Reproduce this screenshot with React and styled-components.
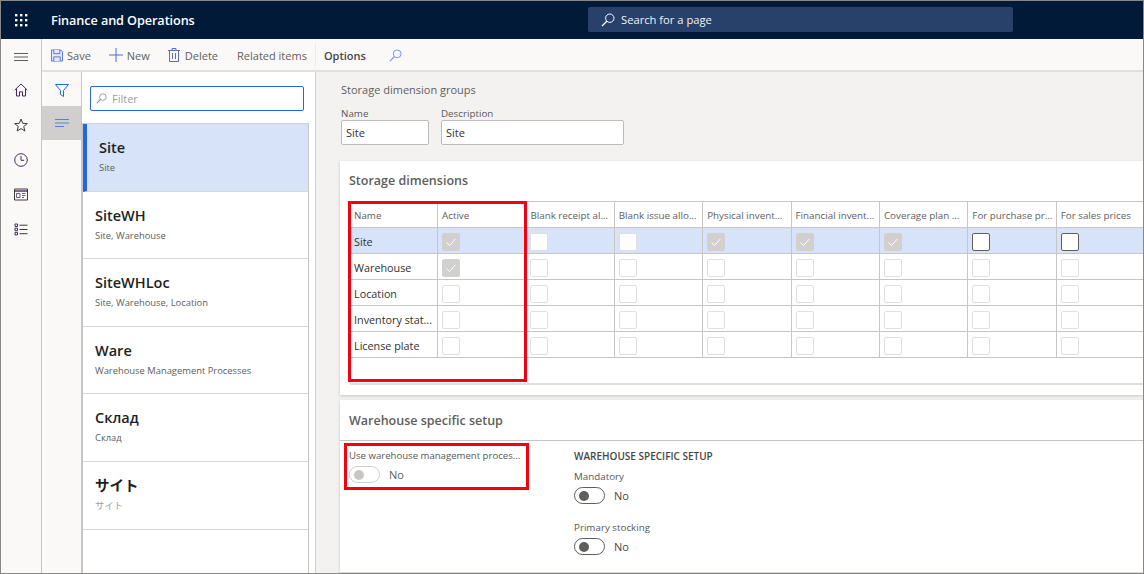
import styled, { createGlobalStyle } from "styled-components";

const GlobalStyle = createGlobalStyle`
  html, body {
    margin: 0;
    padding: 0;
    background: #fff;
    overflow: hidden;
  }
  * {
    box-sizing: border-box;
  }
`;

const Page = styled.div`
  width: 1144px;
  height: 574px;
  display: flex;
  flex-direction: column;
  overflow: hidden;
  border: 1px solid #8a8886;
  font-family: "Open Sans", "Noto Sans CJK JP", sans-serif;
  font-size: 11px;
  color: #323130;
`;

const TopBar = styled.header`
  height: 38px;
  flex: none;
  display: flex;
  align-items: center;
  background: #001a38;
  color: #fff;
  position: relative;
`;

const Waffle = styled.div`
  width: 50px;
  padding-left: 13px;
  display: flex;
`;

const Brand = styled.div`
  font-size: 12.7px;
  font-weight: 600;
  letter-spacing: -0.1px;
`;

const SearchBox = styled.div`
  position: absolute;
  left: 587px;
  top: 6px;
  width: 425px;
  height: 25px;
  padding-left: 13px;
  background: #27416a;
  border-radius: 2px;
  display: flex;
  align-items: center;
  gap: 6px;
  font-size: 11.2px;
  color: #f3f2f1;
`;

const Body = styled.div`
  flex: 1;
  display: flex;
  min-height: 0;
`;

const NavRail = styled.nav`
  width: 41px;
  flex: none;
  background: #faf9f8;
  border-right: 1px solid #c8c6c4;
  display: flex;
  flex-direction: column;
  align-items: center;
  padding-top: 14px;
`;

const NavItem = styled.div`
  height: ${(p) => p.$height || 35}px;
  display: flex;
  align-items: flex-start;
  justify-content: center;
`;

const Main = styled.div`
  flex: 1;
  min-width: 0;
  display: flex;
  flex-direction: column;
`;

const Toolbar = styled.div`
  height: 33px;
  flex: none;
  background: #faf9f8;
  border-bottom: 2px solid #e1dfdd;
  display: flex;
  align-items: center;
  padding: 1px 0 0 9px;
  font-size: 11px;
  color: #605e5c;
`;

const ToolButton = styled.div`
  display: flex;
  align-items: center;
  gap: 4px;
  margin-right: ${(p) => p.$gap || 18}px;
`;

const ToolDivider = styled.div`
  width: 1px;
  height: 24px;
  background: #edebe9;
  margin-right: 8px;
`;

const OptionsLabel = styled.div`
  font-weight: 600;
  color: #484644;
  margin-right: 23px;
`;

const Workspace = styled.div`
  flex: 1;
  min-height: 0;
  display: flex;
`;

const FilterRail = styled.div`
  width: 40px;
  flex: none;
  background: #faf9f8;
  border-right: 1px solid #c8c6c4;
`;

const RailButton = styled.div`
  height: ${(p) => p.$height}px;
  background: ${(p) => (p.$active ? "#d0cfce" : "transparent")};
  display: flex;
  justify-content: center;
  padding-top: ${(p) => p.$top}px;
`;

const ListPane = styled.aside`
  width: 234px;
  flex: none;
  background: #fff;
  border-right: 1px solid #d2d0ce;
  display: flex;
  flex-direction: column;
`;

const FilterWrap = styled.div`
  height: 51px;
  flex: none;
  padding: 14px 5px 0 8px;
`;

const FilterInput = styled.div`
  width: 214px;
  height: 25px;
  border: 1px solid #2266e3;
  border-radius: 2px;
  display: flex;
  align-items: center;
  gap: 5px;
  padding-left: 5px;
  color: #a19f9d;
  font-size: 11px;
`;

const ListBody = styled.div`
  flex: 1;
  margin-right: 6px;
  border-right: 1px solid #c8c6c4;
  border-left: 1px solid #c8c6c4;
  border-top: 1px solid #d2d0ce;
`;

const ListRow = styled.div`
  height: 67.6px;
  padding: 14px 0 0 12px;
  background: ${(p) => (p.$active ? "#d6e3f9" : "#fff")};
  border-left: ${(p) => (p.$active ? "4px solid #2266e3" : "none")};
  border-bottom: 1px solid #d8d6d4;
`;

const RowTitle = styled.div`
  font-size: 14.5px;
  line-height: 20px;
  font-weight: 600;
  color: #201f1e;
`;

const RowText = styled.div`
  font-size: 9.4px;
  line-height: 14px;
  margin-top: 3px;
  color: ${(p) => p.$color || "#605e5c"};
`;

const Content = styled.main`
  flex: 1;
  min-width: 0;
  background: #f3f2f1;
  padding: 10px 0 0 24px;
  overflow: hidden;
`;

const PageCaption = styled.div`
  font-size: 11px;
  line-height: 16px;
  margin-left: 1px;
  color: #605e5c;
`;

const FieldRow = styled.div`
  display: flex;
  gap: 12px;
  margin: 9px 0 0 1px;
`;

const Label = styled.div`
  font-size: 9.8px;
  line-height: 14px;
  color: #5a5856;
  white-space: nowrap;
`;

const FieldLabel = styled(Label)`
  line-height: 13px;
`;

const ProcessLabel = styled(Label)`
  font-size: 9.6px;
`;

const TextBox = styled.div`
  width: ${(p) => p.$width}px;
  height: 25px;
  padding-left: 4px;
  display: flex;
  align-items: center;
  background: #fff;
  border: 1px solid #bebbb8;
  border-radius: 2px;
  font-size: 11px;
`;

const Card = styled.section`
  background: #fff;
  margin-top: ${(p) => p.$top}px;
  height: ${(p) => p.$height}px;
  box-shadow: 0 1px 3px rgba(0, 0, 0, 0.18);
`;

const CardTitle = styled.div`
  height: 40px;
  padding: ${(p) => p.$pad}px 0 0 9px;
  font-size: 12.5px;
  line-height: 20px;
  font-weight: 600;
  color: #605e5c;
`;

const TableWrap = styled.div`
  position: relative;
  margin-left: 10px;
  border-top: 1px solid #c8c6c4;
`;

const Grid = styled.div`
  display: grid;
  grid-template-columns: 88px repeat(8, 88.4px);
  border-bottom: 2px solid #e1dfdd;
  padding-bottom: 25px;
`;

const Cell = styled.div`
  height: 26px;
  padding: ${(p) => (p.$head ? "1px" : "2px")} 0 0 4px;
  display: flex;
  align-items: center;
  overflow: hidden;
  white-space: nowrap;
  border-right: 1px solid #c8c6c4;
  border-bottom: 1px solid #c8c6c4;
  background: ${(p) => (p.$selected ? "#d6e3f9" : "#fff")};
  font-size: ${(p) => (p.$head ? "9.8px" : "10.8px")};
  color: ${(p) => (p.$head ? "#605e5c" : "#323130")};
`;

const CheckBox = styled.div`
  width: 18px;
  height: 18px;
  border-radius: 2px;
  display: flex;
  align-items: center;
  justify-content: center;
  background: ${(p) => (p.$kind === "checked" ? "#d2d0ce" : "#fff")};
  border: 1px solid
    ${(p) =>
      p.$kind === "checked"
        ? "#d2d0ce"
        : p.$kind === "strong"
          ? "#605e5c"
          : "#e1dfdd"};
`;

const RedBox = styled.div`
  position: absolute;
  border: 3px solid #f5000f;
  pointer-events: none;
`;

const TableHighlight = styled(RedBox)`
  left: -2px;
  top: -1px;
  width: 179px;
  height: 181px;
`;

const SetupBody = styled.div`
  position: relative;
  border-top: 1px solid #c8c6c4;
  display: flex;
  padding: 8px 0 0 9px;
`;

const SetupHighlight = styled(RedBox)`
  left: 4px;
  top: 2px;
  width: 185px;
  height: 47px;
`;

const SetupColumn = styled.div`
  width: ${(p) => p.$width}px;
  flex: none;
`;

const GroupHeading = styled.div`
  font-size: 10px;
  line-height: 14px;
  font-weight: 600;
  color: #484644;
  margin-bottom: 7px;
`;

const ToggleField = styled.div`
  height: 51px;
`;

const ToggleRow = styled.div`
  display: flex;
  align-items: center;
  gap: 9px;
  margin-top: 3px;
  font-size: 11px;
  color: ${(p) => (p.$disabled ? "#605e5c" : "#484644")};
`;

const Toggle = styled.div`
  width: 31px;
  height: 17px;
  border-radius: 9px;
  border: 1px solid ${(p) => (p.$disabled ? "#d2d0ce" : "#605e5c")};
  display: flex;
  align-items: center;
  padding-left: 4px;
  background: #fff;
`;

const Knob = styled.div`
  width: 10px;
  height: 10px;
  border-radius: 50%;
  background: ${(p) => (p.$disabled ? "#c8c6c4" : "#605e5c")};
`;

const Check = () => (
  <svg width="12" height="12" viewBox="0 0 12 12" fill="none">
    <path d="M1.500 6.500 4.500 9.500 10.500 2.800" stroke="#fff" strokeWidth="1" />
  </svg>
);

const Glass = ({ color = "#fff", size = 14 }) => (
  <svg width={size} height={size} viewBox="0 0 14 14" fill="none" stroke={color} strokeWidth="1">
    <circle cx="8.800" cy="5.200" r="4.200" />
    <path d="M5.800 8.200 1 13" strokeWidth="1.300" />
  </svg>
);

const icons = {
  home: (
    <svg width="14" height="14" viewBox="0 0 14 14" fill="none" stroke="#4b2a5e" strokeWidth="1">
      <path d="M.8 7 7 1l6.200 6M2.500 5.600V13h3V8.800h3V13h3V5.600" />
    </svg>
  ),
  star: (
    <svg width="14" height="14" viewBox="0 0 14 14" fill="none" stroke="#3b3a39" strokeWidth="1">
      <path d="M7 1l1.700 4.300 4.600.3-3.600 2.900 1.200 4.500L7 10.600l-3.900 2.400 1.200-4.500L.7 5.600l4.600-.3z" />
    </svg>
  ),
  clock: (
    <svg width="14" height="14" viewBox="0 0 14 14" fill="none" stroke="#4b2a5e" strokeWidth="1">
      <circle cx="7" cy="7" r="6.300" />
      <path d="M7 3v4.300h3.200" stroke="#3b3a39" />
    </svg>
  ),
  workspace: (
    <svg width="14" height="13" viewBox="0 0 14 13" fill="none" stroke="#3b3a39" strokeWidth="1">
      <path d="M.5 1h13v11H.5z" />
      <path d="M.5 3h13" stroke="#4b2a5e" strokeWidth="1.400" />
      <path d="M2.500 5.500h3.500v4H2.500zM8 5.500h3.500M8 7.500h3.500M8 9.500h2" stroke="#6b5a7e" />
    </svg>
  ),
  modules: (
    <svg width="14" height="13" viewBox="0 0 14 13" fill="none" stroke="#4b2a5e" strokeWidth="1">
      <path d="M1 1h2.500v2.500H1zM1 5.200h2.500v2.500H1zM1 9.400h2.500v2.500H1z" />
      <path d="M5.500 2.200H13.500M5.500 6.500H13.500M5.500 10.700H13.500" stroke="#3b3a39" />
    </svg>
  ),
};

const navKeys = ["home", "star", "clock", "workspace", "modules"];

const listRows = [
  { title: "Site", text: "Site", active: true },
  { title: "SiteWH", text: "Site, Warehouse" },
  { title: "SiteWHLoc", text: "Site, Warehouse, Location" },
  { title: "Ware", text: "Warehouse Management Processes" },
  { title: "Склад", text: "Склад" },
  { title: "サイト", text: "サイト", color: "#a19f9d" },
];

const headers = [
  "Name",
  "Active",
  "Blank receipt al...",
  "Blank issue allo...",
  "Physical invent...",
  "Financial invent...",
  "Coverage plan ...",
  "For purchase pr...",
  "For sales prices",
];

const names = ["Site", "Warehouse", "Location", "Inventory stat...", "License plate"];

function boxKind(row, col) {
  if (row === 0) {
    if (col === 0 || col === 3 || col === 4 || col === 5) return "checked";
    if (col === 1 || col === 2) return "plain";
    return "strong";
  }
  if (row === 1 && col === 0) return "checked";
  return "empty";
}

function DimensionTable() {
  return (
    <TableWrap>
      <Grid>
        {headers.map((h) => (
          <Cell $head key={h}>
            {h}
          </Cell>
        ))}
        {names.map((name, row) => [
          <Cell key={name} $selected={row === 0}>
            {name}
          </Cell>,
          ...headers.slice(1).map((h, col) => {
            const kind = boxKind(row, col);
            return (
              <Cell key={name + h} $selected={row === 0}>
                <CheckBox $kind={kind}>{kind === "checked" && <Check />}</CheckBox>
              </Cell>
            );
          }),
        ])}
      </Grid>
      <TableHighlight />
    </TableWrap>
  );
}

export default function App() {
  return (
    <>
      <GlobalStyle />
      <Page>
        <TopBar>
          <Waffle>
            <svg width="14" height="14" viewBox="0 0 14 14" fill="#fff">
              {[1, 6, 11].flatMap((y) =>
                [1, 6, 11].map((x) => <rect key={`${x}-${y}`} x={x} y={y} width="2.400" height="2.400" />)
              )}
            </svg>
          </Waffle>
          <Brand>Finance and Operations</Brand>
          <SearchBox>
            <Glass />
            Search for a page
          </SearchBox>
        </TopBar>
        <Body>
          <NavRail>
            <NavItem $height={30}>
              <svg width="14" height="8" viewBox="0 0 14 8" stroke="#605e5c" strokeWidth="1">
                <path d="M0 .500h14M0 4h14M0 7.500h14" />
              </svg>
            </NavItem>
            {navKeys.map((k) => (
              <NavItem key={k}>{icons[k]}</NavItem>
            ))}
          </NavRail>
          <Main>
            <Toolbar>
              <ToolButton>
                <svg width="12" height="13" viewBox="0 0 13 13" fill="#e4e8fa" stroke="#4f6bed" strokeWidth="1">
                  <path d="M.5.500h10l2 2v10H.5z" />
                  <path d="M3 .500v4h6.500v-4M3 12.500V8h7v4.500" stroke="#5c6bc0" />
                </svg>
                Save
              </ToolButton>
              <ToolButton>
                <svg width="14" height="14" viewBox="0 0 14 14" stroke="#4f6bed" strokeWidth="1">
                  <path d="M7 0v14M0 7h14" />
                </svg>
                New
              </ToolButton>
              <ToolButton $gap={19}>
                <svg width="13" height="14" viewBox="0 0 13 14" fill="none" stroke="#5c6bc0" strokeWidth="1">
                  <path d="M0 2.500h12M4 2.500V.500h4v2M1.500 2.500v11h9v-11M4.500 5v6M7.500 5v6" />
                </svg>
                Delete
              </ToolButton>
              <ToolButton $gap={8}>Related items</ToolButton>
              <ToolDivider />
              <OptionsLabel>Options</OptionsLabel>
              <Glass color="#6f8fe8" size={13} />
            </Toolbar>
            <Workspace>
              <FilterRail>
                <RailButton $height={34} $top={12}>
                  <svg width="14" height="13" viewBox="0 0 14 13" fill="none" stroke="#2266e3" strokeWidth="1">
                    <path d="M.5.500h13L8.500 6.500v6l-3-2v-4z" />
                  </svg>
                </RailButton>
                <RailButton $active $height={34} $top={13}>
                  <svg width="14" height="8" viewBox="0 0 14 8" stroke="#4a86e8" strokeWidth="1">
                    <path d="M0 .500h14M0 4h14M0 7.500h9" />
                  </svg>
                </RailButton>
              </FilterRail>
              <ListPane>
                <FilterWrap>
                  <FilterInput>
                    <Glass color="#8a8886" size={11} />
                    Filter
                  </FilterInput>
                </FilterWrap>
                <ListBody>
                  {listRows.map((r) => (
                    <ListRow key={r.title} $active={r.active}>
                      <RowTitle>{r.title}</RowTitle>
                      <RowText $color={r.color}>{r.text}</RowText>
                    </ListRow>
                  ))}
                </ListBody>
              </ListPane>
              <Content>
                <PageCaption>Storage dimension groups</PageCaption>
                <FieldRow>
                  <div>
                    <FieldLabel>Name</FieldLabel>
                    <TextBox $width={88}>Site</TextBox>
                  </div>
                  <div>
                    <FieldLabel>Description</FieldLabel>
                    <TextBox $width={183}>Site</TextBox>
                  </div>
                </FieldRow>
                <Card $top={16} $height={234}>
                  <CardTitle $pad={10}>Storage dimensions</CardTitle>
                  <DimensionTable />
                </Card>
                <Card $top={5} $height={172}>
                  <CardTitle $pad={11}>Warehouse specific setup</CardTitle>
                  <SetupBody>
                    <SetupHighlight />
                    <SetupColumn $width={225}>
                      <ProcessLabel>Use warehouse management proces...</ProcessLabel>
                      <ToggleRow $disabled>
                        <Toggle $disabled>
                          <Knob $disabled />
                        </Toggle>
                        No
                      </ToggleRow>
                    </SetupColumn>
                    <SetupColumn $width={200}>
                      <GroupHeading>WAREHOUSE SPECIFIC SETUP</GroupHeading>
                      <ToggleField>
                        <Label>Mandatory</Label>
                        <ToggleRow>
                          <Toggle>
                            <Knob />
                          </Toggle>
                          No
                        </ToggleRow>
                      </ToggleField>
                      <ToggleField>
                        <Label>Primary stocking</Label>
                        <ToggleRow>
                          <Toggle>
                            <Knob />
                          </Toggle>
                          No
                        </ToggleRow>
                      </ToggleField>
                    </SetupColumn>
                  </SetupBody>
                </Card>
              </Content>
            </Workspace>
          </Main>
        </Body>
      </Page>
    </>
  );
}
